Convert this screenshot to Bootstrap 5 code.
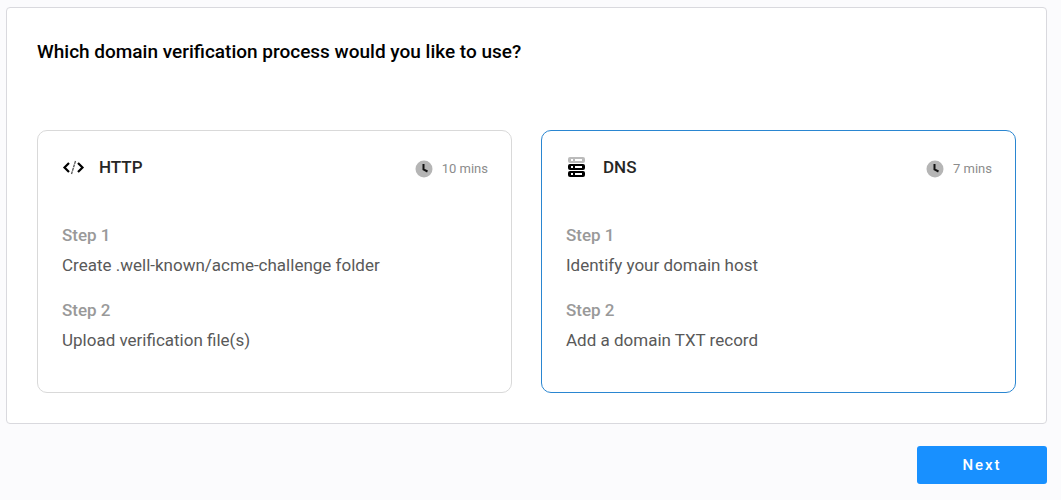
<!DOCTYPE html>
<html lang="en">
<head>
<meta charset="utf-8">
<meta name="viewport" content="width=device-width, initial-scale=1">
<title>Domain verification</title>
<link href="https://cdn.jsdelivr.net/npm/bootstrap@5.3.0/dist/css/bootstrap.min.css" rel="stylesheet">
<style>
body{font-family:Roboto,sans-serif;background:#fbfbfd;color:#000;padding:7px 14px 16px 6px}
.panel{background:#fff;border:1px solid #d9d9de;border-radius:4px;padding:30px}
h1{font-size:19px;line-height:28px;font-weight:500;margin-bottom:64px}
.choices{display:grid;grid-template-columns:repeat(auto-fit,minmax(min(100%,360px),1fr));gap:29px}
.choice{border:1px solid #d9d9d9;border-radius:10px;padding:23px 23px 25px 24px;cursor:pointer;display:block}
.choice:has(input:checked){border-color:#2a86d1}
.choice:has(input:focus-visible){outline:2px solid #1890ff}
.choice-head{height:26px;margin-bottom:42px}
.choice-name{font-size:17px;line-height:26px;font-weight:500;color:#262626;margin-left:14px}
.mins{font-size:13px;line-height:26px;color:#8c8c8c;gap:9px;padding-top:3px}
.step-no{font-size:17px;line-height:26px;font-weight:500;color:#999;display:block}
.step-text{font-size:17px;line-height:26px;color:#595959;display:block;margin-top:4px}
.steps{display:grid;gap:19px;margin-bottom:14px}
.btn-next,.btn-next:hover{width:130px;height:38px;border-radius:3px;background:#1890ff;border:0;color:#fff;font-size:15px;font-weight:500;letter-spacing:2px;margin-top:22px}
</style>
</head>
<body>
<svg width="0" height="0" class="d-none" aria-hidden="true">
<symbol id="clock" viewBox="0 0 18 18"><circle cx="9" cy="9" r="8.5" fill="#b5b5b5"/><path d="M8.5 4v5.5l4 2" fill="none" stroke="#111" stroke-width="2"/></symbol>
</svg>
<form>
<div class="panel">
<h1 id="question">Which domain verification process would you like to use?</h1>
<div class="choices" role="radiogroup" aria-labelledby="question">
<label class="choice position-relative"><input class="visually-hidden" type="radio" name="method" value="http">
<span class="choice-head d-flex align-items-center"><svg width="23" height="18" viewBox="0 0 23 18" fill="none" aria-hidden="true"><path d="M7 5 2.500 9.500 7 14M16 5l4.500 4.500L16 14" stroke="#000" stroke-width="2.2"/><path d="M13.500 3 9.500 16" stroke="#555" stroke-width="1.300" stroke-dasharray="3 .6"/></svg><span class="choice-name">HTTP</span><span class="mins ms-auto d-flex align-items-center"><svg width="18" height="18" aria-hidden="true"><use href="#clock"/></svg>10 mins</span></span>
<span class="steps"><span><span class="step-no">Step 1</span><span class="step-text">Create .well-known/acme-challenge folder</span></span><span><span class="step-no">Step 2</span><span class="step-text">Upload verification file(s)</span></span></span></label>
<label class="choice position-relative"><input class="visually-hidden" type="radio" name="method" value="dns" checked>
<span class="choice-head d-flex align-items-center"><svg width="23" height="22" viewBox="0 0 23 22" aria-hidden="true"><rect x="2" y="1" width="17" height="6" rx="2" fill="#bbb"/><rect x="2" y="8" width="17" height="6" rx="2"/><rect x="2" y="15" width="17" height="6" rx="2"/><path d="M5 4h2m2 0h7M5 11h2m2 0h7M5 18h2m2 0h7" stroke="#fff" stroke-width="2"/></svg><span class="choice-name">DNS</span><span class="mins ms-auto d-flex align-items-center"><svg width="18" height="18" aria-hidden="true"><use href="#clock"/></svg>7 mins</span></span>
<span class="steps"><span><span class="step-no">Step 1</span><span class="step-text">Identify your domain host</span></span><span><span class="step-no">Step 2</span><span class="step-text">Add a domain TXT record</span></span></span></label>
</div></div>
<div class="d-flex justify-content-end"><button type="button" class="btn btn-next">Next</button></div>
</form>
<script src="https://cdn.jsdelivr.net/npm/bootstrap@5.3.0/dist/js/bootstrap.bundle.min.js"></script>
</body>
</html>
